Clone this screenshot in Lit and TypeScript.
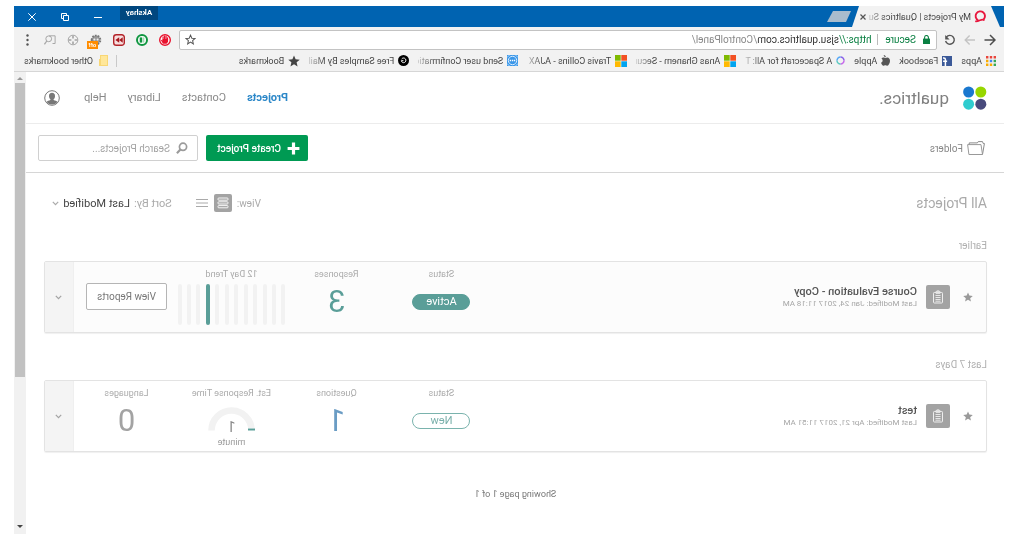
import { LitElement, html, css, svg, nothing } from "lit";
import { customElement, property } from "lit/decorators.js";
import { classMap } from "lit/directives/class-map.js";

const icons = {
  back: svg`<svg width="12" height="12" viewBox="0 0 12 12" fill="none" stroke="#4d4d4d" stroke-width="1.5"><path d="M11.5 6H1.2M6 1L1 6l5 5"/></svg>`,
  forward: svg`<svg width="12" height="12" viewBox="0 0 12 12" fill="none" stroke="#c4c4c4" stroke-width="1.4"><path d="M1 6h9.6M6.4 1.6L10.8 6l-4.4 4.4"/></svg>`,
  reload: svg`<svg width="12" height="12" viewBox="0 0 12 12"><path d="M9.7 3.2A4.4 4.4 0 1 0 10.4 7" fill="none" stroke="#555" stroke-width="1.4"/><path d="M10.8 1v4.4H6.4z" fill="#555"/></svg>`,
  lock: svg`<svg width="7" height="9" viewBox="0 0 7 9"><path d="M0 3.6h7V9H0z" fill="#0b8043"/><path d="M1.6 4V2.4a1.9 1.9 0 0 1 3.8 0V4" fill="none" stroke="#0b8043" stroke-width="1.1"/></svg>`,
  starLine: svg`<svg width="11" height="11" viewBox="0 0 24 24"><path d="M12 2.5l2.9 6.6 7.1.7-5.4 4.7 1.6 7L12 17.8 5.8 21.5l1.6-7L2 9.8l7.1-.7z" fill="none" stroke="#555" stroke-width="2.2"/></svg>`,
  star: svg`<svg width="12" height="12" viewBox="0 0 24 24"><path d="M12 1l3.2 7.6 8.3.7-6.3 5.4 1.9 8.1L12 18.5l-7.1 4.3 1.9-8.1L.5 9.300l8.300-.7z" fill="#444"/></svg>`,
  hand: svg`<svg width="12" height="12" viewBox="0 0 12 12"><circle cx="6" cy="6" r="5.300" fill="#fff" stroke="#e8112d" stroke-width="1.400"/><path d="M3.500 5.600V3.800M4.900 5V2.400M6.400 5V2M7.900 5.200V2.900" stroke="#e8112d" stroke-width="1.200" stroke-linecap="round"/><path d="M2.900 5h5.600v1.600l1-.9.6.5-2.100 3.600H4.400L2.900 7.800z" fill="#e8112d"/></svg>`,
  book: svg`<svg width="12" height="12" viewBox="0 0 12 12"><circle cx="6" cy="6" r="5" fill="#fff" stroke="#0f9640" stroke-width="2"/><rect x="3.600" y="3.400" width="2.100" height="5.200" fill="#a9d8b8"/><rect x="6" y="3.400" width="2.300" height="5.200" fill="#0f9640"/></svg>`,
  rewind: svg`<svg width="12" height="12" viewBox="0 0 12 12"><rect x=".7" y=".7" width="10.600" height="10.600" rx="2.600" fill="#f7dede" stroke="#b3242a" stroke-width="1.400"/><path d="M2.300 3.300L5.800 6 2.300 8.700zM5.800 3.300L9.600 6 5.800 8.700z" fill="#a5171d"/></svg>`,
  robot: svg`<svg width="12" height="12" viewBox="0 0 12 12"><circle cx="6" cy="6" r="4.400" fill="#9a9a9a" stroke="#777" stroke-width="1.800" stroke-dasharray="1.700 1.100"/><circle cx="4.400" cy="5.600" r="1" fill="#eee"/><circle cx="7.600" cy="5.600" r="1" fill="#eee"/></svg>`,
  target: svg`<svg width="12" height="12" viewBox="0 0 12 12"><circle cx="6" cy="6" r="4.800" fill="none" stroke="#a3a3a3" stroke-width="1"/><path d="M6 2v2.400M6 7.600V10M2 6h2.400M7.600 6H10" stroke="#a3a3a3" stroke-width="1.600"/></svg>`,
  lens: svg`<svg width="12" height="12" viewBox="0 0 12 12" fill="none" stroke="#a8a8a8"><path d="M3.500 9.500H.9V1.800h6"/><circle cx="7.300" cy="4.800" r="2.900"/><path d="M9.200 7l2.400 3.400" stroke-width="1.300"/></svg>`,
  dots: svg`<svg width="3" height="12" viewBox="0 0 3 12" fill="#555"><circle cx="1.500" cy="1.500" r="1.200"/><circle cx="1.500" cy="6" r="1.200"/><circle cx="1.500" cy="10.500" r="1.200"/></svg>`,
  apps: svg`<svg width="10" height="10" viewBox="0 0 10 10"><path fill="#e8453c" d="M0 0h2.400v2.400H0zM3.800 0h2.400v2.400H3.800zM7.600 0H10v2.400H7.600z"/><path fill="#34a853" d="M0 3.800h2.400v2.400H0z"/><path fill="#4285f4" d="M3.800 3.800h2.400v2.400H3.800z"/><path fill="#f9ab00" d="M7.600 3.800H10v2.400H7.600zM3.800 7.600h2.400V10H3.800zM7.600 7.600H10V10H7.600z"/><path fill="#34a853" d="M0 7.600h2.400V10H0z"/></svg>`,
  facebook: svg`<svg width="10" height="10" viewBox="0 0 10 10"><path fill="#3b5998" d="M0 0h10v10H0z"/><path fill="none" stroke="#fff" stroke-width="1.500" d="M9 2H8.200C7 2 6.600 2.500 6.600 3.600V10M4.900 5.200h4"/></svg>`,
  apple: svg`<svg width="9" height="11" viewBox="0 0 18 22"><path fill="#555" d="M12.600 0c.2 2.500-1.900 4.700-4.200 4.600C8.100 2.300 10.300.2 12.600 0zM9 6.200c1 0 2.200-1.200 4.200-1.200 1.600 0 3 .8 3.900 2.100-3.600 2.200-3 7 .9 8.300-.9 2.600-2.800 5.900-4.800 5.900-1.500 0-2-.9-3.900-.9s-2.500.9-3.900.9C3 21.300 0 16.500 0 12.200 0 7.800 2.700 5.200 5.200 5.200c1.700 0 2.900 1 3.800 1z"/></svg>`,
  ring: svg`<svg width="9" height="9" viewBox="0 0 9 9" fill="none" stroke-width="1.500"><path stroke="#8b63e8" d="M4.500 1A3.500 3.500 0 0 0 1 4.500"/><path stroke="#c86bea" d="M1 4.500A3.500 3.500 0 0 0 4.500 8"/><path stroke="#5cc9c0" d="M4.500 8A3.500 3.500 0 0 0 8 4.500"/><path stroke="#57a8f5" d="M8 4.500A3.500 3.500 0 0 0 4.500 1"/></svg>`,
  windows: svg`<svg width="12" height="12" viewBox="0 0 12 12"><path fill="#f25022" d="M0 0h5.700v5.700H0z"/><path fill="#7fba00" d="M6.300 0H12v5.700H6.300z"/><path fill="#00a4ef" d="M0 6.300h5.700V12H0z"/><path fill="#ffb900" d="M6.300 6.300H12V12H6.300z"/></svg>`,
  chat: svg`<svg width="11" height="11" viewBox="0 0 11 11"><path fill="#3b97e8" d="M0 0h11v11H0z"/><circle cx="5.500" cy="5.500" r="4.200" fill="#3b97e8" stroke="#d6ebff" stroke-width="1"/><path d="M2.800 5.500h1.400M4.900 5.500h1.300M7 5.500h1.300" stroke="#fff" stroke-width="1.500"/><path d="M0 2.500L2.500 0M8.500 0L11 2.500M0 8.500L2.500 11M8.500 11L11 8.500" stroke="#a9d4fb"/></svg>`,
  gBadge: svg`<svg width="11" height="11" viewBox="0 0 11 11"><circle cx="5.500" cy="5.500" r="5.500" fill="#000"/><path d="M7.300 4A2.300 2.300 0 1 0 7.700 5.700H5.600" fill="none" stroke="#fff" stroke-width="1"/></svg>`,
  folderMark: svg`<svg width="9" height="11" viewBox="0 0 9 11"><path fill="#f8d775" d="M0 0h8v4h1v7H0z"/><path fill="#ffe79a" d="M1 1h6v9H1z"/></svg>`,
  favicon: svg`<svg width="13" height="13" viewBox="0 0 13 13" fill="none" stroke="#e8173e" stroke-width="1.900"><path d="M3.600 9.600A4.700 4.700 0 1 1 8.800 10.300"/><path d="M2.600 10.400c2.400-2.800 5 1.600 9.200.9" stroke-width="1.600"/></svg>`,
  logo: svg`<svg width="24" height="24" viewBox="0 0 24 24"><circle cx="6.200" cy="6" r="5.500" fill="#97d700"/><circle cx="18.400" cy="6" r="5.500" fill="#1a78cf"/><circle cx="6.200" cy="18.200" r="5.500" fill="#484a7c"/><circle cx="18.400" cy="18.200" r="5.500" fill="#2fcccf"/></svg>`,
  user: svg`<svg width="16" height="16" viewBox="0 0 16 16"><circle cx="8" cy="8" r="7.300" fill="#fff" stroke="#777"/><path fill="#777" d="M8 2.800c2 0 3 1.300 3 3.100 0 1.400-.6 2.600-1.400 3.300v.8c1.400.6 3.200.9 3.800 2A7 7 0 0 1 8 14.600 7 7 0 0 1 2.600 12c.6-1.100 2.400-1.400 3.800-2v-.8C5.600 8.500 5 7.300 5 5.900 5 4.100 6 2.800 8 2.800z"/></svg>`,
  folder: svg`<svg width="18" height="14" viewBox="0 0 18 14" fill="none" stroke="#8a8a8a" stroke-width="1"><path d="M2.500 13.500L.6 2.500h1.200L2.500.6h4.300l.8 1.300h8.200v2"/><path d="M2.500 13.500h13.600l1.300-9.900H4L2.500 13.500z" stroke="#999"/></svg>`,
  plus: svg`<svg width="13" height="13" viewBox="0 0 13 13"><path d="M4.900 .6h3.200v4.300H12.400v3.200H8.100v4.300H4.900V8.100H.6V4.900h4.300z" fill="#fff"/></svg>`,
  search: svg`<svg width="12" height="12" viewBox="0 0 12 12" fill="none" stroke="#9b9b9b"><circle cx="5" cy="4.800" r="3.600" stroke-width="1.700"/><path d="M7.600 7.500l3.500 3.800" stroke-width="2.100"/></svg>`,
  cards: svg`<svg width="18" height="18" viewBox="0 0 18 18"><rect width="18" height="18" rx="2" fill="#a3a3a3"/><g fill="none" stroke="#fff" stroke-width=".9"><rect x="4" y="4" width="10" height="2.200" rx=".8"/><rect x="4" y="7.800" width="10" height="2.200" rx=".8"/><rect x="4" y="11.600" width="10" height="2.200" rx=".8"/></g></svg>`,
  list: svg`<svg width="12" height="8" viewBox="0 0 12 8"><path d="M0 .5h12M0 4h12M0 7.500h12" stroke="#aaa"/></svg>`,
  chevron: svg`<svg width="7" height="5" viewBox="0 0 7 5"><path d="M.8.8l2.700 2.800L6.200.8" fill="none" stroke="currentColor" stroke-width="1.200"/></svg>`,
  fav: svg`<svg width="10" height="10" viewBox="0 0 24 24"><path d="M12 1l3.200 7.600 8.300.7-6.300 5.400 1.900 8.100L12 18.500l-7.100 4.300 1.900-8.100L.5 9.300l8.300-.7z" fill="#9a9a9a"/></svg>`,
  clipboard: svg`<svg width="24" height="24" viewBox="0 0 24 24"><rect width="24" height="24" rx="2" fill="#a3a3a3"/><rect x="7.500" y="7.500" width="9" height="10.500" rx=".8" fill="none" stroke="#eee"/><path d="M10 6.300h4v2.200h-4zM11.200 5.600h1.600" fill="#e6e6e6" stroke="#e6e6e6" stroke-width=".8"/><path d="M9.500 10.500h5M9.500 12.500h5M9.500 14.500h5M9.500 16.200h5" stroke="#eee" stroke-width=".9"/></svg>`,
  gauge: svg`<svg width="47" height="24" viewBox="0 0 47 24" fill="none" stroke-width="6.500"><path d="M3.500 23.500a20 20 0 0 1 40 0" stroke="#f2f2f2"/><path d="M0 22.500h7" stroke="#fff" stroke-width="3"/><path d="M0 22.500h7" stroke="#5a9e98" stroke-width="2"/></svg>`,
};

interface Bookmark { icon: unknown; text: string; long?: boolean; }

const bookmarks: Bookmark[] = [
  { icon: icons.apps, text: "Apps" },
  { icon: icons.facebook, text: "Facebook" },
  { icon: icons.apple, text: "Apple" },
  { icon: icons.ring, text: "A Spacecraft for All: T", long: true },
  { icon: icons.windows, text: "Anas Ghanem - Secur", long: true },
  { icon: icons.windows, text: "Travis Collins - AJAX T", long: true },
  { icon: icons.chat, text: "Send user Confirmatic", long: true },
  { icon: icons.gBadge, text: "Free Samples By Mail", long: true },
  { icon: icons.star, text: "Bookmarks" },
];

@customElement("browser-chrome")
class BrowserChrome extends LitElement {
  static styles = css`
    :host { display: block; font-family: Roboto, "Open Sans", sans-serif; font-size: 9px; color: #444; }
    svg { display: block; flex: none; }
    button { border: 0; padding: 0; background: none; font: inherit; color: inherit; display: flex; }
    a { color: inherit; text-decoration: none; }
    .titlebar { display: flex; height: 21px; background: #0063b1; color: #fff; padding: 0 14px 0 4px; }
    .tab { display: flex; align-items: center; gap: 3px; width: 148px; box-sizing: border-box; padding: 0 14px 0 13px; background: #f2f2f2; color: #444; clip-path: polygon(9px 0, 141px 0, 100% 100%, 0 100%); }
    .tabtitle { flex: 1; white-space: nowrap; mask-image: linear-gradient(90deg, #000 84%, transparent 105%); }
    .newtab { align-self: center; width: 24px; height: 11px; margin-left: 1px; background: #a9bccd; clip-path: polygon(0 0, 18px 0, 100% 100%, 5px 100%); }
    .winbtns { margin-left: auto; display: flex; gap: 25px; }
    .winbtns button { align-items: center; }
    .user { width: 38px; height: 14px; line-height: 14px; background: #00477f; text-align: center; font-size: 8px; font-weight: 600; margin-right: -7px; }
    .toolbar { display: flex; align-items: center; height: 23px; box-sizing: border-box; padding: 2px 12px 0 8px; background: #f2f2f2; }
    .nav { display: flex; gap: 8px; width: 59px; }
    .address { flex: 1; display: flex; align-items: center; height: 20px; box-sizing: border-box; border: 1px solid #c3c3c3; border-radius: 2px; background: #fff; padding: 0 5px 0 6px; font-size: 10px; white-space: nowrap; }
    .secure { color: #0b8043; padding: 0 7px; }
    .url { border-left: 1px solid #bbb; line-height: 11px; padding-left: 6px; flex: 1; color: #888; }
    .scheme { color: #0b8043; }
    .host { color: #333; }
    .exts { display: flex; align-items: center; gap: 11px; margin-left: 8px; }
    .robot { position: relative; }
    .off { position: absolute; left: 4px; top: 7px; width: 11px; height: 8px; line-height: 7px; font-size: 6px; font-weight: 600; text-align: center; background: #ff8c00; color: #fff; }
    .dots { margin-left: 4px; }
    .bookmarks { display: flex; align-items: center; height: 22px; box-sizing: border-box; padding: 0 10px 0 8px; background: #f2f2f2; border-bottom: 1px solid #d6d6d6; white-space: nowrap; gap: 9px; }
    .mark { display: flex; align-items: center; gap: 4px; }
    .long { width: 100px; mask-image: linear-gradient(90deg, #000 84%, transparent 105%); }
    .other { margin-left: auto; display: flex; align-items: center; gap: 6px; border-left: 1px solid #c9c9c9; padding-left: 8px; height: 12px; }
  `;
  render() {
    return html`
      <div class="titlebar">
        <div class="tab">${icons.favicon}<span class="tabtitle">My Projects | Qualtrics Su</span>
          <button aria-label="Close tab"><svg width="6" height="6" viewBox="0 0 6 6"><path d="M.5.5l5 5M5.500.5l-5 5" stroke="#555" stroke-width="1.200"/></svg></button>
        </div>
        <button class="newtab" aria-label="New tab"></button>
        <div class="winbtns">
          <div class="user">Akshay</div>
          <button aria-label="Minimize"><svg width="8" height="8" viewBox="0 0 8 8"><path d="M0 4.500h8" stroke="#fff"/></svg></button>
          <button aria-label="Restore"><svg width="8" height="8" viewBox="0 0 8 8" fill="none" stroke="#fff"><path d="M.5 2.500h5v5h-5zM2.500 2.500v-2h5v5h-2"/></svg></button>
          <button aria-label="Close"><svg width="8" height="8" viewBox="0 0 8 8"><path d="M.3.3l7.400 7.400M7.700.3L.3 7.700" stroke="#fff"/></svg></button>
        </div>
      </div>
      <div class="toolbar">
        <div class="nav">
          <button aria-label="Back">${icons.back}</button>
          <button aria-label="Forward">${icons.forward}</button>
          <button aria-label="Reload">${icons.reload}</button>
        </div>
        <div class="address">
          ${icons.lock}<span class="secure">Secure</span>
          <div class="url" role="textbox" aria-label="Address"><span class="scheme">https://</span><span class="host">sjsu.qualtrics.com</span>/ControlPanel/</div>
          <button aria-label="Bookmark this page">${icons.starLine}</button>
        </div>
        <div class="exts">
          <button aria-label="Ad blocker">${icons.hand}</button>
          <button aria-label="Reader">${icons.book}</button>
          <button aria-label="Playback">${icons.rewind}</button>
          <button class="robot" aria-label="Assistant">${icons.robot}<span class="off">off</span></button>
          <button aria-label="Target">${icons.target}</button>
          <button aria-label="Lens">${icons.lens}</button>
          <button class="dots" aria-label="Menu">${icons.dots}</button>
        </div>
      </div>
      <nav class="bookmarks">
        ${bookmarks.map((b) => html`<a href="#" class=${classMap({ mark: true, long: !!b.long })}>${b.icon}<span>${b.text}</span></a>`)}
        <a href="#" class="other">${icons.folderMark}<span>Other bookmarks</span></a>
      </nav>`;
  }
}

interface Project {
  group: string; name: string; modified: string; status: string;
  countLabel: string; count: number; trend?: number[]; minutes?: number; languages?: number;
}

const projects: Project[] = [
  { group: "Earlier", name: "Course Evaluation - Copy", modified: "Jan 24, 2017 11:18 AM", status: "Active", countLabel: "Responses", count: 3, trend: [0, 0, 0, 0, 0, 0, 0, 0, 3, 0, 0, 0] },
  { group: "Last 7 Days", name: "test", modified: "Apr 21, 2017 11:51 AM", status: "New", countLabel: "Questions", count: 1, minutes: 1, languages: 0 },
];

@customElement("project-card")
class ProjectCard extends LitElement {
  @property({ attribute: false }) project!: Project;
  static styles = css`
    :host { display: block; }
    svg { display: block; flex: none; }
    button { font: inherit; padding: 0; }
    .card { display: grid; grid-template-columns: 1fr repeat(4, 105px) 29px; height: 72px; box-sizing: border-box; border: 1px solid #e3e3e3; border-radius: 2px; background: #fff; box-shadow: 0 1px 1px #f0f0f0; }
    .active { background: #fcfcfc; }
    .lead { display: flex; align-items: center; padding-left: 13px; }
    .fav { border: 0; background: none; margin-right: 13px; }
    .names { margin-left: 9px; }
    .name { margin: 0; font-size: 11px; line-height: 13px; font-weight: 500; color: #555; }
    .sub { font-size: 8px; line-height: 12px; color: #a6a6a6; }
    .cell { display: flex; flex-direction: column; align-items: center; padding-top: 5px; }
    .label { font-size: 9px; line-height: 14px; color: #aaa; }
    .pill { box-sizing: border-box; width: 58px; height: 16px; line-height: 14px; margin-top: 13px; border: 1px solid #7ab3ad; border-radius: 8px; text-align: center; font-size: 11px; color: #7ab0ab; }
    .active .pill { background: #5a9e98; border-color: #5a9e98; color: #fff; }
    .big { font-size: 31px; line-height: 42px; color: #6a9cc4; }
    .active .big { color: #5a9e98; }
    .big.mute { color: #a3a3a3; }
    .trend { display: flex; justify-content: space-between; width: 108px; height: 41px; margin-top: 3px; }
    .bar { width: 4px; border-radius: 2px; background: #f2f2f2; }
    .on { background: #5a9e98; }
    .gaugebox { display: grid; margin-top: 7px; justify-items: center; align-items: end; }
    .gaugebox > * { grid-area: 1 / 1; }
    .mins { font-size: 14px; line-height: 8px; color: #888; }
    .unit { font-size: 9px; line-height: 12px; margin-top: 5px; color: #999; }
    .report { width: 81px; height: 27px; margin-top: 16px; border: 1px solid #b5b5b5; border-radius: 2px; background: #fff; font-size: 10px; color: #777; }
    .more { border: 0; border-left: 1px solid #efefef; background: #f4f4f4; display: grid; place-items: center; color: #a3a3a3; }
  `;
  render() {
    const p = this.project;
    return html`<article class=${classMap({ card: true, active: p.status === "Active" })}>
      <div class="lead">
        <button class="fav" aria-label="Favorite">${icons.fav}</button>
        ${icons.clipboard}
        <div class="names"><h3 class="name">${p.name}</h3><div class="sub">Last Modified: ${p.modified}</div></div>
      </div>
      <div class="cell"><span class="label">Status</span><span class="pill">${p.status}</span></div>
      <div class="cell"><span class="label">${p.countLabel}</span><span class="big">${p.count}</span></div>
      ${p.trend
        ? html`<div class="cell"><span class="label">12 Day Trend</span>
            <div class="trend">${p.trend.map((v) => html`<span class=${classMap({ bar: true, on: v > 0 })}></span>`)}</div></div>
            <div class="cell"><button class="report">View Reports</button></div>`
        : nothing}
      ${p.minutes !== undefined
        ? html`<div class="cell"><span class="label">Est. Response Time</span>
            <div class="gaugebox">${icons.gauge}<span class="mins">${p.minutes}</span></div><span class="unit">minute</span></div>
            <div class="cell"><span class="label">Languages</span><span class="big mute">${p.languages}</span></div>`
        : nothing}
      <button class="more" aria-label="Project menu">${icons.chevron}</button>
    </article>`;
  }
}

@customElement("app-root")
class AppRoot extends LitElement {
  static styles = css`
    :host { display: block; background: #fff; font-family: Roboto, "Liberation Sans", sans-serif; font-size: 11px; color: #888; }
    svg { display: block; flex: none; }
    button { font: inherit; padding: 0; border: 0; background: none; }
    a { color: inherit; text-decoration: none; }
    .mirror { transform: scaleX(-1); min-height: 100vh; box-sizing: border-box; padding: 6px 14px 16px 10px; display: flex; flex-direction: column; }
    .view { flex: 1; display: flex; }
    .page { flex: 1; min-width: 0; }
    .scroll { width: 12px; background: #f1f1f1; display: flex; flex-direction: column; align-items: center; }
    .arrow { height: 11px; display: grid; place-items: center; }
    .thumb { width: 10px; height: 294px; background: #c1c1c1; }
    .arrow.down { margin-top: auto; height: 14px; }
    .header { display: flex; align-items: center; height: 52px; box-sizing: border-box; border-bottom: 1px solid #ececec; padding: 0 18px 0 17px; }
    .brand { font-size: 17px; line-height: 24px; color: #808080; margin-left: 14px; }
    .menu { margin-left: auto; display: flex; align-items: center; gap: 21px; }
    .current { color: #2b87c8; font-weight: 700; }
    .avatar { margin: 1px 0 0 3px; }
    .tools { display: flex; align-items: center; height: 49px; box-sizing: border-box; border-bottom: 1px solid #d6d6d6; padding: 0 12px 0 19px; }
    .folders { display: flex; align-items: center; gap: 4px; font-size: 10px; }
    .create { margin-left: auto; display: flex; align-items: center; gap: 6px; width: 102px; height: 26px; padding-left: 8px; background: #009a53; border-radius: 2px; color: #fff; font-size: 10px; font-weight: 500; }
    .search { display: flex; align-items: center; gap: 6px; width: 160px; height: 26px; box-sizing: border-box; margin-left: 8px; padding: 0 9px; border: 1px solid #d0d0d0; border-radius: 2px; font-size: 10px; }
    .search input { flex: 1; min-width: 0; border: 0; padding: 0; outline: 0; background: none; font: inherit; }
    .search input::placeholder { color: #a3a3a3; opacity: 1; }
    .list { padding: 0 18px 0 17px; }
    .listhead { display: flex; align-items: center; height: 60px; margin-bottom: 5px; padding-right: 8px; color: #aaa; }
    .title { margin: 0; font-size: 14px; font-weight: 400; color: #aaa; }
    .viewmode { margin-left: auto; display: flex; align-items: center; gap: 5px; font-size: 10px; }
    .viewmode button + button { margin-left: 1px; }
    .sort { display: flex; align-items: center; gap: 4px; margin-left: 24px; }
    .sort select { appearance: none; border: 0; padding: 0; margin: 0; background: none; font: inherit; color: #444; }
    .group { margin-bottom: 24px; }
    .grouphead { margin: 0 0 7px; font-size: 10px; line-height: 16px; font-weight: 400; color: #b0b0b0; }
    .pager { padding-top: 8px; text-align: center; font-size: 9px; line-height: 20px; color: #777; }
  `;
  render() {
    return html`<div class="mirror">
      <browser-chrome></browser-chrome>
      <div class="view">
        <main class="page">
          <header class="header">
            ${icons.logo}<span class="brand">qualtrics.</span>
            <nav class="menu">
              <a href="#" class="current">Projects</a><a href="#">Contacts</a><a href="#">Library</a><a href="#">Help</a>
              <button class="avatar" aria-label="Account">${icons.user}</button>
            </nav>
          </header>
          <div class="tools">
            <a href="#" class="folders">${icons.folder}<span>Folders</span></a>
            <button class="create">${icons.plus}<span>Create Project</span></button>
            <label class="search">${icons.search}<input type="text" aria-label="Search Projects" placeholder="Search Projects..."></label>
          </div>
          <div class="list">
            <div class="listhead">
              <h1 class="title">All Projects</h1>
              <div class="viewmode"><span>View:</span><button aria-label="Cards">${icons.cards}</button><button aria-label="List">${icons.list}</button></div>
              <div class="sort"><label for="sort">Sort By:</label>
                <select id="sort"><option>Last Modified</option><option>Name</option></select>${icons.chevron}</div>
            </div>
            ${projects.map((p) => html`<section class="group"><h2 class="grouphead">${p.group}</h2><project-card .project=${p}></project-card></section>`)}
            <div class="pager">Showing page 1 of 1</div>
          </div>
        </main>
        <div class="scroll">
          <span class="arrow"><svg width="6" height="4" viewBox="0 0 6 4"><path d="M0 4l3-3 3 3z" fill="#999"/></svg></span>
          <span class="thumb"></span>
          <span class="arrow down"><svg width="6" height="4" viewBox="0 0 6 4"><path d="M0 0l3 3 3-3z" fill="#444"/></svg></span>
        </div>
      </div>
    </div>`;
  }
}
